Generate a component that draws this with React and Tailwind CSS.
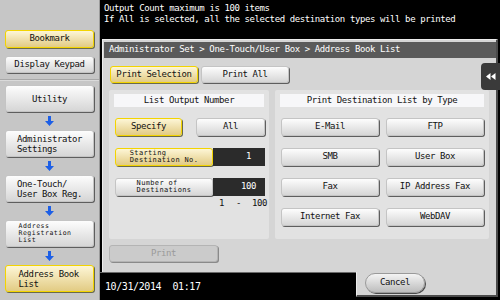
import React from "react";

const plain =
  "rounded-[3px] border border-[#c4c4c4] bg-linear-to-b from-[#fdfdfd] to-[#d6d6d6] shadow-[1px_1px_0_#5e5e5e]";
const yellow =
  "rounded-[3px] border border-[#f3d400] bg-linear-to-b from-[#fdf6d6] to-[#e2cb83] shadow-[1px_1px_0_#6a6a4a]";

function DownArrow() {
  return (
    <div className="h-[18px] flex items-center justify-center">
      <svg width="9" height="10" viewBox="0 0 9 10">
        <path d="M3 0h3v5h3l-4.5 5L0 5h3z" fill="#1d5fe6" />
      </svg>
    </div>
  );
}

function SideButton({ children, active, small }) {
  return (
    <div
      className={`mx-[5px] h-[27px] flex items-center justify-center ${active ? yellow : plain}`}
    >
      <div
        className={
          small
            ? "text-left text-[6.5px] leading-[7px] tracking-[0.5px] w-[62px]"
            : "text-left leading-[10px]"
        }
      >
        {children}
      </div>
    </div>
  );
}

function Sidebar() {
  return (
    <div className="w-[100px] h-full bg-[#c6c6c6] flex flex-col border-r border-[#9a9a9a]">
      <div className="h-[80px] pt-[30px] flex flex-col gap-[8px] border-b border-[#a8a8a8]">
        <div className={`mx-[5px] h-[18px] flex items-center justify-center ${yellow}`}>Bookmark</div>
        <div className={`mx-[5px] h-[17px] flex items-center justify-center ${plain}`}>Display Keypad</div>
      </div>
      <div className="pt-[4px] flex flex-col border-t border-[#dadada]">
        <SideButton>Utility</SideButton>
        <DownArrow />
        <SideButton>
          Administrator
          <br />
          Settings
        </SideButton>
        <DownArrow />
        <SideButton>
          One-Touch/
          <br />
          User Box Reg.
        </SideButton>
        <DownArrow />
        <SideButton small>
          Address
          <br />
          Registration
          <br />
          List
        </SideButton>
        <DownArrow />
        <SideButton active>
          <span className="inline-block w-[62px]">
            Address Book
            <br />
            List
          </span>
        </SideButton>
      </div>
    </div>
  );
}

function TypeButton({ label }) {
  return <div className={`w-[98px] h-[18px] flex items-center justify-center ${plain}`}>{label}</div>;
}

function SectionHead({ children }) {
  return (
    <div className="mx-[5px] mt-[4px] h-[13px] bg-[#f7f7f9] flex items-center justify-center">{children}</div>
  );
}

function TwoLine({ a, b }) {
  return (
    <div className="text-left text-[7px] leading-[7px] tracking-[0.35px]">
      {a}
      <br />
      {b}
    </div>
  );
}

export default function App() {
  return (
    <div className="relative w-[500px] h-[300px] bg-black flex overflow-hidden font-['DejaVu_Sans_Mono',monospace] text-[9px] tracking-[-0.4px] text-[#111]">
      <Sidebar />
      <div className="flex-1 flex flex-col">
        <div className="h-[39px] pl-[4px] pt-[3px] leading-[11px] text-white">
          <div>Output Count maximum is 100 items</div>
          <div>If All is selected, all the selected destination types will be printed</div>
        </div>

        <div className="ml-[2px] mr-[2px] h-[233px] bg-[#d5d5d5] border-l border-t border-[#ececec] border-r-2 border-r-[#4a4a4a] flex flex-col">
          <div className="mt-[2px] ml-[1px] h-[16px] bg-[#5a5a5a] text-white flex items-center pl-[5px]">
            Administrator Set &gt; One-Touch/User Box &gt; Address Book List
          </div>

          <div className="mt-[8px] ml-[7px] flex gap-[3px]">
            <div className={`w-[88px] h-[17px] flex items-center justify-center ${yellow}`}>Print Selection</div>
            <div className={`w-[88px] h-[17px] flex items-center justify-center ${plain}`}>Print All</div>
          </div>

          <div className="mt-[7px] ml-[6px] flex gap-[6px]">
            <div className="w-[160px] h-[149px] bg-[#e2e2e2] rounded-[2px] flex flex-col">
              <SectionHead>List Output Number</SectionHead>
              <div className="mt-[11px] ml-[6px] flex gap-[14px]">
                <div className={`w-[67px] h-[18px] flex items-center justify-center ${yellow}`}>Specify</div>
                <div className={`w-[69px] h-[18px] flex items-center justify-center ${plain}`}>All</div>
              </div>
              <div className="mt-[12px] ml-[6px] flex">
                <div className={`w-[98px] h-[18px] flex items-center justify-center ${yellow}`}>
                  <TwoLine a="Starting" b="Destination No." />
                </div>
                <div className="w-[52px] h-[18px] bg-[#2b2b2b] text-white flex items-center justify-end pr-[14px]">1</div>
              </div>
              <div className="mt-[12px] ml-[6px] flex">
                <div className={`w-[98px] h-[18px] flex items-center justify-center ${plain}`}>
                  <TwoLine a="Number of" b="Destinations" />
                </div>
                <div className="w-[52px] h-[18px] bg-[#2b2b2b] text-white flex items-center justify-end pr-[9px]">100</div>
              </div>
              <div className="mt-[2px] ml-[110px] flex leading-[10px]">
                <span className="w-[17px]">1</span>
                <span className="w-[16px]">-</span>
                <span>100</span>
              </div>
            </div>

            <div className="w-[214px] h-[149px] bg-[#e2e2e2] rounded-[2px] flex flex-col">
              <SectionHead>Print Destination List by Type</SectionHead>
              <div className="mt-[11px] ml-[6px] grid grid-cols-[98px_98px] gap-x-[7px] gap-y-[12px]">
                <TypeButton label="E-Mail" />
                <TypeButton label="FTP" />
                <TypeButton label="SMB" />
                <TypeButton label="User Box" />
                <TypeButton label="Fax" />
                <TypeButton label="IP Address Fax" />
                <TypeButton label="Internet Fax" />
                <TypeButton label="WebDAV" />
              </div>
            </div>
          </div>

          <div className="mt-[6px] ml-[6px] w-[109px] h-[17px] rounded-[3px] bg-[#cbcbcb] border border-[#b4b4b4] shadow-[1px_1px_0_#8a8a8a] text-[#9a9a9a] flex items-center justify-center">
            Print
          </div>
        </div>

        <div className="h-[28px] flex">
          <div className="w-[256px] pl-[5px] flex items-center text-white text-[10px] border-t border-[#6a6a6a]">
            10/31/2014&nbsp;&nbsp;01:17
          </div>
          <div className="flex-1 mr-[2px] mb-[3px] bg-[#d5d5d5] border-l border-[#ececec] border-r-2 border-r-[#4a4a4a] border-b-2 border-b-[#4a4a4a] flex items-start pl-[8px] pt-[1px]">
            <div className="w-[60px] h-[20px] rounded-full bg-linear-to-b from-[#f4f4f4] to-[#bdbdbd] border border-[#9a9a9a] shadow-[1px_1px_0_#4a4a4a] flex items-center justify-center">
              Cancel
            </div>
          </div>
        </div>
      </div>

      <div className="absolute left-[481px] top-[63px] w-[19px] h-[27px] bg-[#3a3a3a] rounded-l-[4px] flex items-center justify-center">
        <svg width="10" height="7" viewBox="0 0 10 7">
          <path d="M0 3.5L4.5 0v7zM5 3.5L9.5 0v7z" fill="#fff" />
        </svg>
      </div>
    </div>
  );
}
